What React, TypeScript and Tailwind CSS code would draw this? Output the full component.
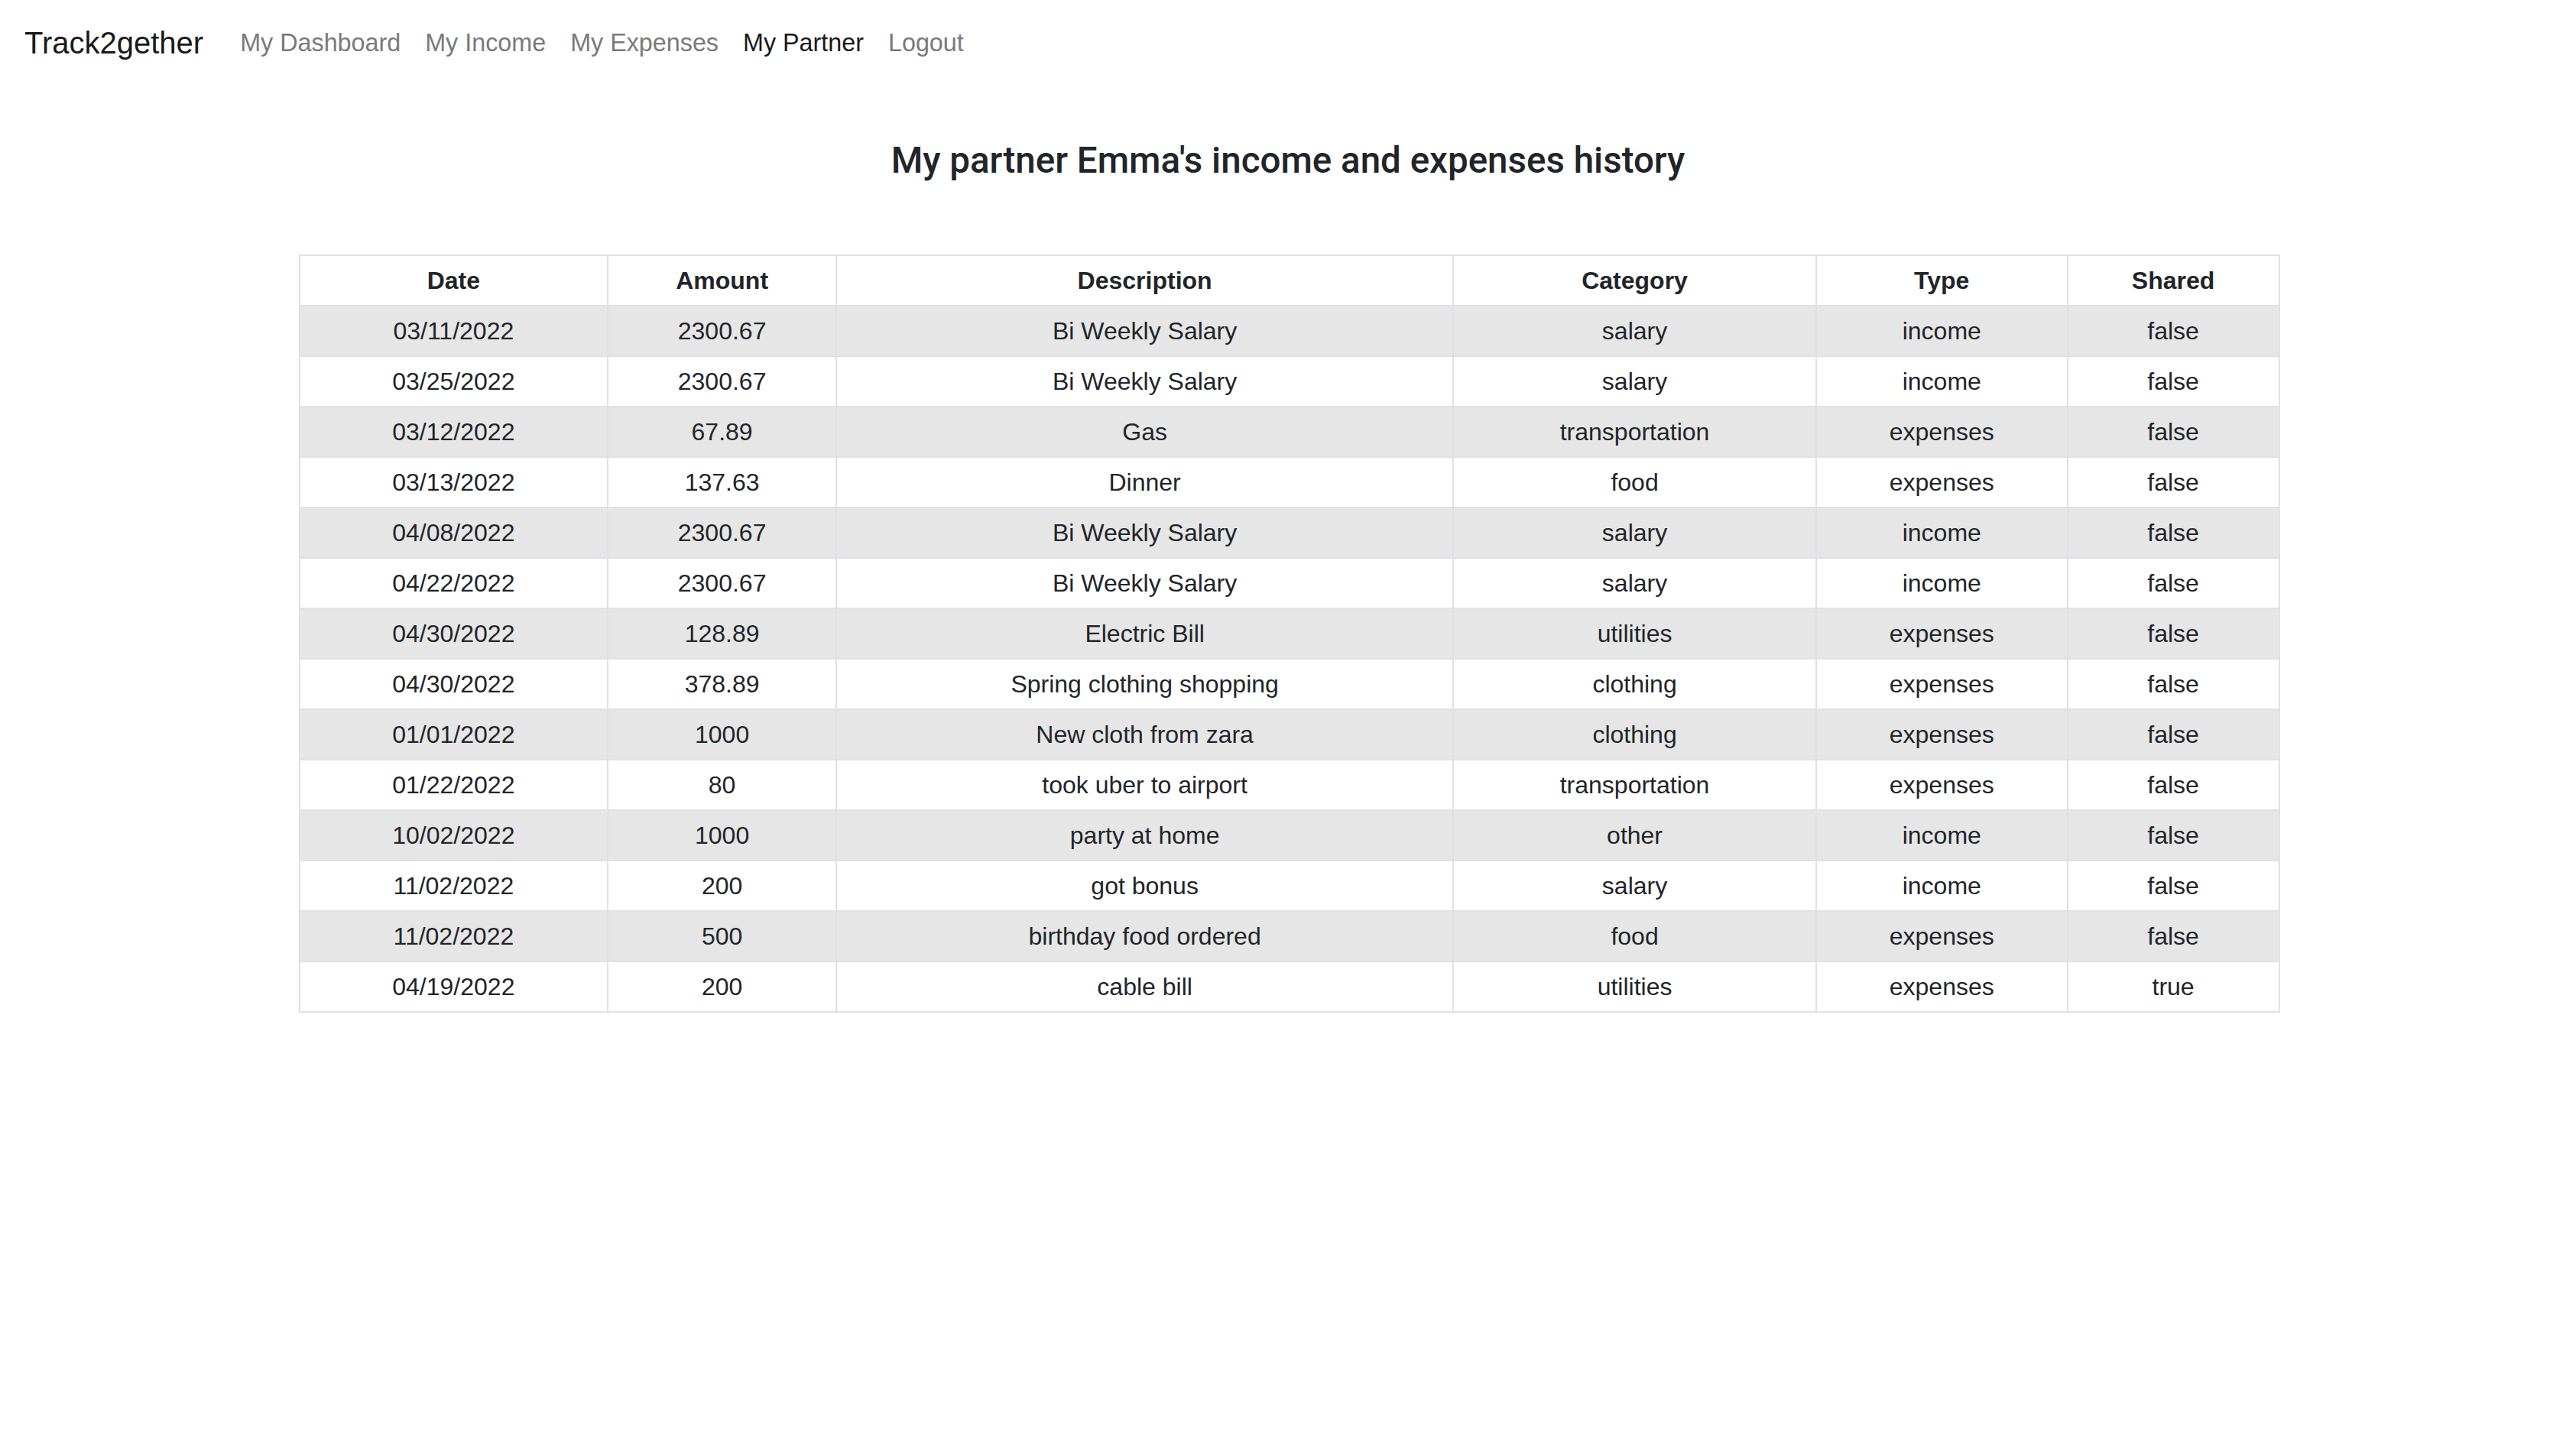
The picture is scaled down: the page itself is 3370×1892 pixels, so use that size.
import React from "react";

type Row = [string, string, string, string, string, string];

const rows: Row[] = [
  ["03/11/2022", "2300.67", "Bi Weekly Salary", "salary", "income", "false"],
  ["03/25/2022", "2300.67", "Bi Weekly Salary", "salary", "income", "false"],
  ["03/12/2022", "67.89", "Gas", "transportation", "expenses", "false"],
  ["03/13/2022", "137.63", "Dinner", "food", "expenses", "false"],
  ["04/08/2022", "2300.67", "Bi Weekly Salary", "salary", "income", "false"],
  ["04/22/2022", "2300.67", "Bi Weekly Salary", "salary", "income", "false"],
  ["04/30/2022", "128.89", "Electric Bill", "utilities", "expenses", "false"],
  ["04/30/2022", "378.89", "Spring clothing shopping", "clothing", "expenses", "false"],
  ["01/01/2022", "1000", "New cloth from zara", "clothing", "expenses", "false"],
  ["01/22/2022", "80", "took uber to airport", "transportation", "expenses", "false"],
  ["10/02/2022", "1000", "party at home", "other", "income", "false"],
  ["11/02/2022", "200", "got bonus", "salary", "income", "false"],
  ["11/02/2022", "500", "birthday food ordered", "food", "expenses", "false"],
  ["04/19/2022", "200", "cable bill", "utilities", "expenses", "true"],
];

const headers = ["Date", "Amount", "Description", "Category", "Type", "Shared"];
const widths = ["w-[404px]", "w-[299px]", "w-[808px]", "w-[475px]", "w-[329px]", "w-[277px]"];

export default function App() {
  return (
    <div
      className="min-h-screen bg-white text-[#212529]"
      style={{ fontFamily: '"Liberation Sans", Arial, sans-serif' }}
    >
      <nav className="flex items-center pl-[32px] py-[16px]">
        <a className="text-[40px] leading-[60px] py-[10px] mr-[32px] text-[#1a1a1a]">Track2gether</a>
        <ul className="flex items-center">
          <li><a className="block px-[16px] text-[32.3px] leading-[48px] text-[#7a7a7a]">My Dashboard</a></li>
          <li><a className="block px-[16px] text-[32.3px] leading-[48px] text-[#7a7a7a]">My Income</a></li>
          <li><a className="block px-[16px] text-[32.3px] leading-[48px] text-[#7a7a7a]">My Expenses</a></li>
          <li><a className="block px-[16px] text-[32.3px] leading-[48px] text-[#1a1a1a]">My Partner</a></li>
          <li><a className="block px-[16px] text-[32.3px] leading-[48px] text-[#7a7a7a]">Logout</a></li>
        </ul>
      </nav>
      <h3
        className="text-center text-[47.5px] leading-[67px] font-medium mt-[65px] text-[#212529]"
        style={{ fontFamily: 'Roboto, "Liberation Sans", sans-serif' }}
      >
        My partner Emma's income and expenses history
      </h3>
      <div className="flex justify-center mt-[89px] pl-[3px]">
        <table className="border-collapse w-[2592px] text-[32px] leading-[48px] text-center">
          <thead>
            <tr>
              {headers.map((h, i) => (
                <th key={h} className={`${widths[i]} border-2 border-[#dee2e6] py-[8px] px-[8px] font-bold`}>
                  {h}
                </th>
              ))}
            </tr>
          </thead>
          <tbody>
            {rows.map((r, ri) => (
              <tr key={ri} className={ri % 2 === 0 ? "bg-[#e6e6e6]" : "bg-white"}>
                {r.map((c, ci) => (
                  <td key={ci} className="border-2 border-[#dee2e6] py-[8px] px-[8px]">
                    {c}
                  </td>
                ))}
              </tr>
            ))}
          </tbody>
        </table>
      </div>
    </div>
  );
}
